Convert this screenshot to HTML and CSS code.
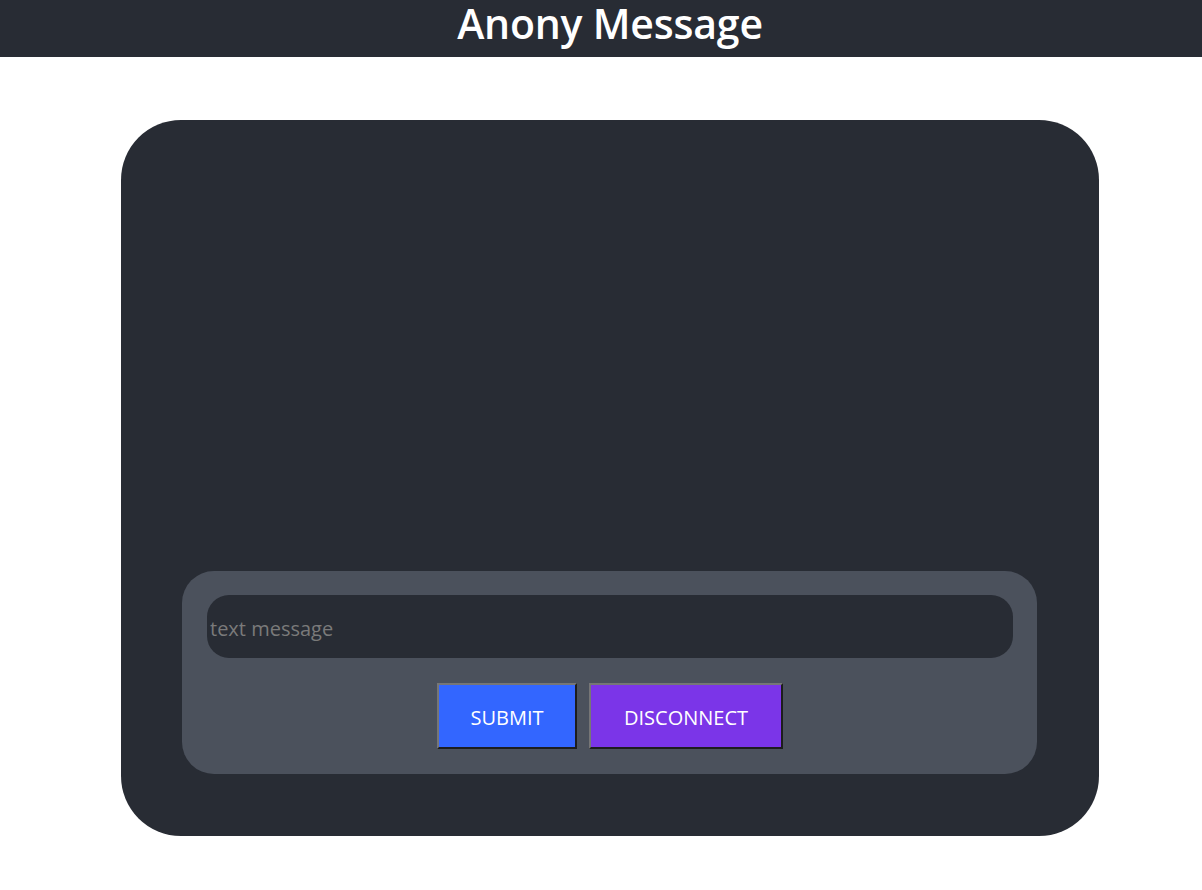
FILE: index.html
```html
<!DOCTYPE html>
<html lang="en">
<head>
<meta charset="utf-8">
<title>Anony Message</title>
<link rel="stylesheet" href="styles.css">
</head>
<body>
<header class="topbar">
  <h1 class="title">Anony Message</h1>
</header>
<main class="page">
  <section class="chat">
    <div class="messages"></div>
    <form class="composer">
      <input class="msg-input" type="text" placeholder="text message">
      <div class="actions">
        <button type="button" class="btn btn-submit">SUBMIT</button>
        <button type="button" class="btn btn-disconnect">DISCONNECT</button>
      </div>
    </form>
  </section>
</main>
</body>
</html>
```
FILE: styles.css
```css
* { box-sizing: border-box; }
html, body { margin: 0; padding: 0; background: #ffffff; }
body { font-family: "Open Sans", "Noto Sans", sans-serif; }

.topbar {
  height: 57px;
  background: #282c34;
  display: flex;
  justify-content: center;
  align-items: flex-start;
  padding-left: 18px;
}
.title {
  margin: 0;
  color: #ffffff;
  font-size: 41px;
  font-weight: 600;
  line-height: 47px;
  letter-spacing: -0.2px;
}

.page {
  padding: 63px 0 0 121px;
}
.chat {
  width: 978px;
  height: 716px;
  background: #282c34;
  border-radius: 60px;
  display: flex;
  flex-direction: column;
  padding: 0 62px 62px 61px;
}
.messages { flex: 1; }
.composer {
  margin: 0;
  background: #4b515c;
  border-radius: 32px;
  padding: 24px 24px 25px 25px;
  display: flex;
  flex-direction: column;
  gap: 25px;
}
.msg-input {
  height: 63px;
  width: 100%;
  border: none;
  outline: none;
  border-radius: 22px;
  background: #282c34;
  color: #ffffff;
  font-family: inherit;
  font-size: 20px;
  padding: 3px 3px 0;
}
.msg-input::placeholder { color: #7a7a7a; }
.actions {
  display: flex;
  justify-content: center;
  gap: 12px;
}
.btn {
  height: 66px;
  border-style: solid;
  border-width: 2px;
  border-top-color: #767676;
  border-left-color: #767676;
  border-right-color: #1d1d1d;
  border-bottom-color: #1d1d1d;
  color: #ffffff;
  font-family: inherit;
  font-size: 20px;
  padding: 3px 0 0;
}
.btn-submit { width: 140px; background: #3366ff; }
.btn-disconnect { width: 194px; background: #7b35e8; }
```
